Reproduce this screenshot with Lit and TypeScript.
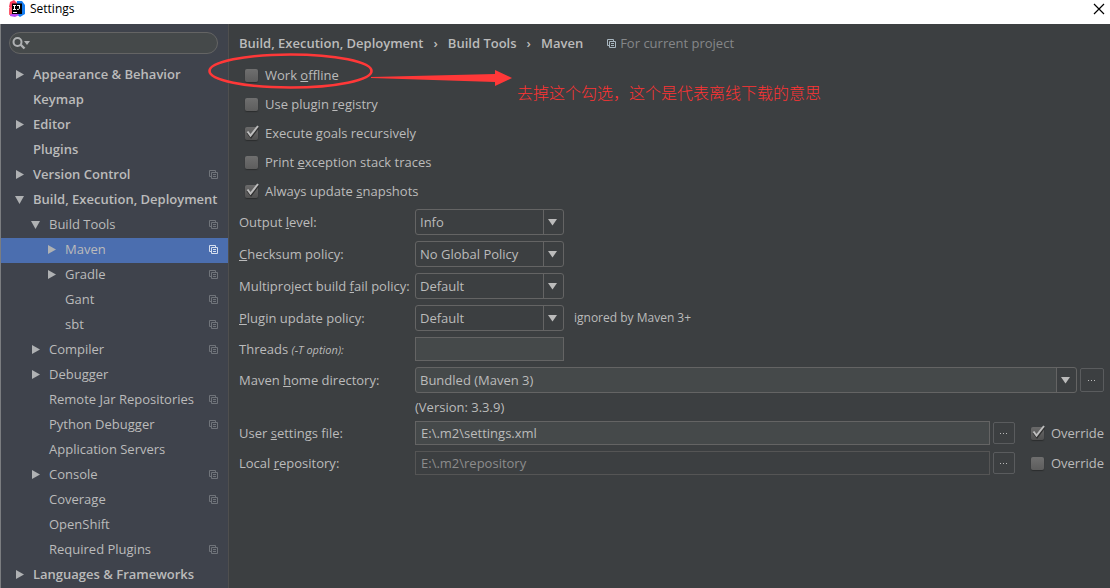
import { LitElement, html, svg, css, nothing } from "lit";
import { customElement, property, state } from "lit/decorators.js";
import { classMap } from "lit/directives/class-map.js";

interface TreeItem {
  label: string;
  level: 0 | 1 | 2;
  arrow?: "closed" | "open";
  project?: boolean;
}

const TREE: TreeItem[] = [
  { label: "Appearance & Behavior", level: 0, arrow: "closed" },
  { label: "Keymap", level: 0 },
  { label: "Editor", level: 0, arrow: "closed" },
  { label: "Plugins", level: 0 },
  { label: "Version Control", level: 0, arrow: "closed", project: true },
  { label: "Build, Execution, Deployment", level: 0, arrow: "open" },
  { label: "Build Tools", level: 1, arrow: "open", project: true },
  { label: "Maven", level: 2, arrow: "closed", project: true },
  { label: "Gradle", level: 2, arrow: "closed", project: true },
  { label: "Gant", level: 2, project: true },
  { label: "sbt", level: 2, project: true },
  { label: "Compiler", level: 1, arrow: "closed", project: true },
  { label: "Debugger", level: 1, arrow: "closed" },
  { label: "Remote Jar Repositories", level: 1, project: true },
  { label: "Python Debugger", level: 1, project: true },
  { label: "Application Servers", level: 1 },
  { label: "Console", level: 1, arrow: "closed", project: true },
  { label: "Coverage", level: 1, project: true },
  { label: "OpenShift", level: 1 },
  { label: "Required Plugins", level: 1, project: true },
  { label: "Languages & Frameworks", level: 0, arrow: "closed" },
];

const projectIcon = html`<svg class="project-icon" width="9" height="9" viewBox="0 0 9 9" aria-hidden="true">
  <path d="M2.5 6.5H.5V.5h6v2M2.5 2.5h6v6h-6zM4 4.5h3M4 6.5h3" fill="none" stroke="currentColor" />
</svg>`;

@customElement("tick-box")
class TickBox extends LitElement {
  @property() before = "";
  @property() key = "";
  @property() after = "";
  @property({ type: Boolean }) checked = false;

  static styles = css`
    :host { display: block; }
    .label { display: flex; align-items: center; gap: 6px; line-height: 18px; white-space: nowrap; }
    .box { display: grid; width: 14px; height: 18px; align-items: center; }
    .box > * { grid-area: 1 / 1; }
    .input {
      appearance: none; margin: 0; width: 13px; height: 13px; border-radius: 2px;
      background: linear-gradient(#6f6f6f, #5d5d5d);
      box-shadow: 0 1px 1px #2b2d2e;
    }
    .tick { display: none; width: 14px; height: 18px; pointer-events: none; }
    .input:checked { background: linear-gradient(#6a6a6a, #505050); }
    .input:checked + .tick { display: block; }
  `;

  render() {
    return html`<label class="label">
      <span class="box">
        <input class="input" type="checkbox" .checked=${this.checked} />
        <svg class="tick" viewBox="0 0 14 18" aria-hidden="true">
          <path d="M2.5 8.500 6 13 13 3.500" fill="none" stroke="#303030" stroke-width="2.500" />
          <path d="M2.500 7.500 5.500 11.500 13 2" fill="none" stroke="#bdbdbd" stroke-width="2" />
        </svg>
      </span>
      <span>${this.before}${this.key ? html`<u>${this.key}</u>` : nothing}${this.after}</span>
    </label>`;
  }
}

@customElement("app-root")
class AppRoot extends LitElement {
  @state() private selected = "Maven";

  static styles = css`
    :host {
      display: flex; flex-direction: column; min-height: 100vh; position: relative;
      box-sizing: border-box; overflow: hidden; background: #3c3f41; color: #bbbbbb;
      font: 13px/18px "Open Sans", "Noto Sans CJK SC", sans-serif;
    }
    * { box-sizing: border-box; }
    button, input, select { font: inherit; color: inherit; }
    button { padding: 0; border: 0; background: none; }

    .titlebar { display: flex; align-items: center; height: 24px; padding: 0 5px 6px 9px; gap: 5px; background: #ffffff; color: #000000; font-size: 12px; }
    .logo { flex: none; }
    .title { flex: 1; }
    .close { display: flex; }

    .body { display: flex; flex: 1; }
    .sidebar { flex: none; width: 229px; background: #3f434c; border-left: 1px solid #7b7d80; border-right: 1px solid #4f4f4f; }
    .search { display: flex; align-items: center; gap: 2px; height: 22px; margin: 8px 10px 9px 8px; padding: 0 8px 0 2px; border: 1px solid #646464; border-radius: 11px; background: #45494a; }
    .search-input { flex: 1; min-width: 0; border: 0; outline: 0; background: none; }
    .tree { list-style: none; margin: 0; padding: 0; }
    .row { display: flex; align-items: center; width: 100%; height: 25px; padding: 0 10px 2px 13px; text-align: left; white-space: nowrap; }
    .name { flex: 1 0 auto; padding-bottom: 2px; }
    .level-0 { font-weight: 600; }
    .level-1 { padding-left: 29px; }
    .level-2 { padding-left: 45px; }
    .arrow { display: flex; flex: none; width: 19px; padding-left: 1px; color: #afb1b3; }
    .row .project-icon { color: #70747a; }
    .selected { background: #4b6eaf; }
    .selected .project-icon { color: #d5deee; }

    .content { flex: 1; min-width: 0; padding: 9px 6px 0 10px; }
    .crumbs { display: flex; align-items: center; height: 20px; font-weight: 600; white-space: nowrap; }
    .sep { margin: 0 10px; }
    .scope { display: flex; align-items: center; gap: 4px; margin-left: 24px; color: #858789; font-weight: 400; }
    .scope .project-icon { color: #a9b7c0; }
    .checks { display: flex; flex-direction: column; gap: 11px; padding: 13px 0 9px 6px; }

    .form { display: grid; grid-template-columns: 176px 1fr; row-gap: 6px; align-items: center; }
    .form > label { white-space: nowrap; }
    .option { font-size: 11px; font-style: italic; }
    .line { display: flex; align-items: center; gap: 3px; }
    .combo { display: grid; grid-template-columns: 1fr 20px; width: 149px; height: 26px; border: 1px solid #646464; border-radius: 3px; align-items: center; }
    .select { appearance: none; grid-area: 1 / 1 / 2 / 3; height: 24px; border: 0; padding: 0 24px 0 4px; background: none; outline: 0; }
    .drop { grid-area: 1 / 2; display: flex; align-items: center; justify-content: center; height: 24px; padding-right: 2px; border-left: 1px solid #646464; pointer-events: none; }
    .wide { flex: 1; background: linear-gradient(#3c3f41, #3c3f41) right / 19px no-repeat #45494a; }
    .note { margin-left: 7px; font-size: 12px; }
    .field { flex: 1; min-width: 0; height: 24px; border: 1px solid #646464; padding: 0 5px; background: #45494a; outline: 0; }
    .short { flex: none; width: 149px; }
    .field:disabled { border-color: #555555; background: #3c3f41; color: #8c8c8c; }
    .more { display: flex; align-items: center; justify-content: center; width: 22px; height: 22px; border: 1px solid #5a5c5e; border-radius: 2px; }
    .large { width: 24px; height: 24px; }
    .override { margin-left: 13px; }
    .version { grid-column: 2; line-height: 16px; }

    .annotation { position: absolute; left: 205px; top: 50px; pointer-events: none; }
    .remark { position: absolute; left: 517px; top: 80px; color: #ff3333; font: 300 16px/24px "Noto Sans CJK SC", sans-serif; white-space: nowrap; }
  `;

  private treeRow(item: TreeItem) {
    const path = item.arrow === "open" ? "M0 1h9L4.5 9z" : "M1 0v9l8-4.5z";
    return html`<li>
      <button
        class=${classMap({ row: true, [`level-${item.level}`]: true, selected: item.label === this.selected })}
        @click=${() => (this.selected = item.label)}
      >
        <span class="arrow">${item.arrow
          ? html`<svg width="9" height="9" viewBox="0 0 9 9" aria-hidden="true">${svg`<path d=${path} fill="currentColor" />`}</svg>`
          : nothing}</span>
        <span class="name">${item.label}</span>
        ${item.project ? projectIcon : nothing}
      </button>
    </li>`;
  }

  private combo(id: string, value: string, wide = false) {
    return html`<div class=${classMap({ combo: true, wide })}>
      <select class="select" id=${id}><option>${value}</option></select>
      <span class="drop"><svg width="9" height="8" viewBox="0 0 9 8" aria-hidden="true"><path d="M0 1h9L4.5 7.5z" fill="#bbbbbb" /></svg></span>
    </div>`;
  }

  private more(label: string, large = false) {
    return html`<button class=${classMap({ more: true, large })} aria-label=${label}>
      <svg width="8" height="2" viewBox="0 0 8 2" aria-hidden="true"><path d="M0 1h1v1H0zM3 1h1v1H3zM6 1h1v1H6z" fill="#bbbbbb" /></svg>
    </button>`;
  }

  render() {
    return html`
      <header class="titlebar">
        <svg class="logo" width="16" height="18" viewBox="0 0 16 18" aria-hidden="true">
          <path d="M1 2 5 0l4 4-5 6-4-3z" fill="#fc3c5c" />
          <path d="M8 1l5 0 3 4v9l-5 3-4-3z" fill="#167df0" />
          <path d="M1 8l5 2 4 5-4 2-5-1z" fill="#b74af7" />
          <path d="M0 8l3-1v7l-3 1z" fill="#fc5a6d" />
          <path d="M3 3.500h10v10.500H3z" fill="#000000" />
          <path d="M4 5.500h3M5.500 5.500v4M4 9.500h3M8 5.500h3M10.500 5.500v3q0 1-2.500 1M4 12.500h4" fill="none" stroke="#ffffff" />
        </svg>
        <span class="title">Settings</span>
        <button class="close" aria-label="Close">
          <svg width="12" height="12" viewBox="0 0 12 12" aria-hidden="true"><path d="M1 1l10 10M11 1 1 11" stroke="#000000" stroke-width="1.200" /></svg>
        </button>
      </header>
      <div class="body">
        <nav class="sidebar">
          <div class="search">
            <svg width="19" height="14" viewBox="0 0 19 14" aria-hidden="true">
              <circle cx="5.500" cy="6" r="4" fill="none" stroke="#afb1b3" stroke-width="2" />
              <path d="M8.500 8.500 12.500 12.500" stroke="#afb1b3" stroke-width="2.400" />
              <path d="M12 5h6l-3 4z" fill="#afb1b3" />
            </svg>
            <input class="search-input" type="text" aria-label="Search settings" />
          </div>
          <ul class="tree">${TREE.map((item) => this.treeRow(item))}</ul>
        </nav>
        <main class="content">
          <div class="crumbs">
            <span>Build, Execution, Deployment</span><span class="sep">›</span>
            <span>Build Tools</span><span class="sep">›</span>
            <span>Maven</span>
            <span class="scope">${projectIcon}For current project</span>
          </div>
          <div class="checks">
            <tick-box before="Work " key="o" after="ffline"></tick-box>
            <tick-box before="Use plugin " key="r" after="egistry"></tick-box>
            <tick-box before="Execute " key="g" after="oals recursively" checked></tick-box>
            <tick-box before="Print " key="e" after="xception stack traces"></tick-box>
            <tick-box before="Always update " key="s" after="napshots" checked></tick-box>
          </div>
          <div class="form">
            <label for="level">Output <u>l</u>evel:</label>
            ${this.combo("level", "Info")}
            <label for="checksum"><u>C</u>hecksum policy:</label>
            ${this.combo("checksum", "No Global Policy")}
            <label for="fail">Multiproject build <u>f</u>ail policy:</label>
            ${this.combo("fail", "Default")}
            <label for="update"><u>P</u>lugin update policy:</label>
            <div class="line">${this.combo("update", "Default")}<span class="note">ignored by Maven 3+</span></div>
            <label for="threads">Threads <span class="option">(-T option):</span></label>
            <div class="line"><input class="field short" id="threads" type="text" /></div>
            <label for="home">Maven <u>h</u>ome directory:</label>
            <div class="line">${this.combo("home", "Bundled (Maven 3)", true)}${this.more("Browse Maven home", true)}</div>
            <span class="version">(Version: 3.3.9)</span>
            <label for="settings">User <u>s</u>ettings file:</label>
            <div class="line">
              <input class="field" id="settings" type="text" value="E:\\.m2\\settings.xml" />
              ${this.more("Browse settings file")}
              <tick-box class="override" before="Override" checked></tick-box>
            </div>
            <label for="repository">Local <u>r</u>epository:</label>
            <div class="line">
              <input class="field" id="repository" type="text" value="E:\\.m2\\repository" disabled />
              ${this.more("Browse local repository")}
              <tick-box class="override" before="Override"></tick-box>
            </div>
          </div>
        </main>
      </div>
      <svg class="annotation" width="310" height="42" viewBox="0 0 310 42" aria-hidden="true">
        <ellipse cx="85.500" cy="21" rx="81" ry="16.500" fill="none" stroke="#ff3838" stroke-width="2.600" />
        <path d="M166 27 290 24V20l17 8-17 8V32L166 28z" fill="#ff3838" />
      </svg>
      <span class="remark">去掉这个勾选，这个是代表离线下载的意思</span>
    `;
  }
}
